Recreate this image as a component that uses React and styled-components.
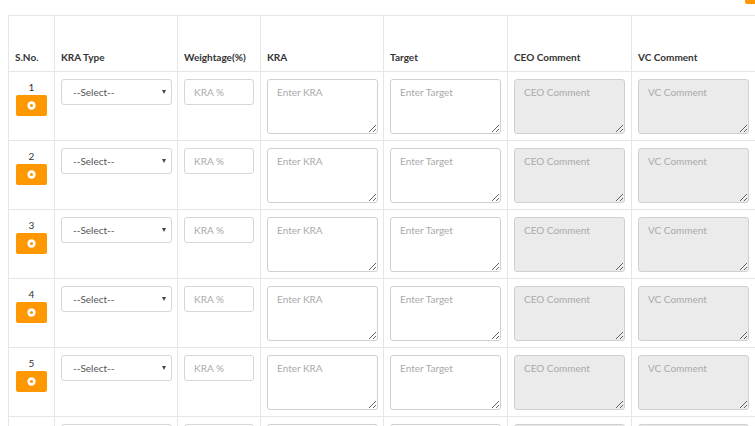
import React from 'react'
import styled, { createGlobalStyle } from 'styled-components'

const rows = [1, 2, 3, 4, 5, 6]

export default () => (
  <>
    <GlobalStyle />
    <Page>
      <TopBar>
        <CornerButton />
      </TopBar>
      <Table>
        <colgroup>
          <col style={{ width: 46 }} />
          <col style={{ width: 123 }} />
          <col style={{ width: 83 }} />
          <col style={{ width: 123 }} />
          <col style={{ width: 124 }} />
          <col style={{ width: 124 }} />
          <col style={{ width: 124 }} />
        </colgroup>
        <thead>
          <tr>
            <Th>S.No.</Th>
            <Th>KRA Type</Th>
            <Th>Weightage(%)</Th>
            <Th>KRA</Th>
            <Th>Target</Th>
            <Th>CEO Comment</Th>
            <Th>VC Comment</Th>
          </tr>
        </thead>
        <tbody>
          {rows.map(n => (
            <Row key={n} n={n} />
          ))}
        </tbody>
      </Table>
    </Page>
  </>
)

const Row = ({ n }) => (
  <tr>
    <NumCell>
      <Num>{n}</Num>
      <AddButton>
        <svg width='9' height='9' viewBox='0 0 10 10'>
          <circle cx='5' cy='5' r='4.6' fill='#fff' />
          <circle cx='5' cy='5' r='1.8' fill='#ff9800' />
        </svg>
      </AddButton>
    </NumCell>
    <Td>
      <SelectWrap>
        <Select defaultValue=''>
          <option value=''>--Select--</option>
        </Select>
        <Caret />
      </SelectWrap>
    </Td>
    <Td>
      <Input placeholder='KRA %' />
    </Td>
    <Td>
      <TextArea placeholder='Enter KRA' />
    </Td>
    <Td>
      <TextArea placeholder='Enter Target' />
    </Td>
    <Td>
      <TextArea placeholder='CEO Comment' disabled />
    </Td>
    <Td>
      <TextArea placeholder='VC Comment' disabled />
    </Td>
  </tr>
)

const GlobalStyle = createGlobalStyle`
  html, body {
    margin: 0;
    padding: 0;
    background: #fff;
    overflow: hidden;
  }
  body {
    font-family: Lato, "Liberation Sans", sans-serif;
    color: #333;
  }
`

const Page = styled.div`
  padding-left: 8px;
  width: 747px;
`

const TopBar = styled.div`
  height: 15px;
  display: flex;
  justify-content: flex-end;
  align-items: flex-start;
`

const CornerButton = styled.div`
  width: 10px;
  height: 4px;
  background: #ff9800;
  border-bottom-left-radius: 2px;
`

const Table = styled.table`
  border-collapse: collapse;
  table-layout: fixed;
  width: 747px;
  border-top: 1px solid #e6e6e6;
  border-left: 1px solid #e6e6e6;
`

const Th = styled.th`
  height: 47px;
  border: 1px solid #e6e6e6;
  border-top: none;
  text-align: left;
  vertical-align: bottom;
  padding: 0 6px 8px;
  font-size: 10px;
  font-weight: 700;
  color: #333;
  white-space: nowrap;
`

const Td = styled.td`
  height: 69px;
  border: 1px solid #e6e6e6;
  vertical-align: top;
  padding: 7px 6px 0;
  box-sizing: border-box;
`

const NumCell = styled(Td)`
  text-align: center;
  padding: 9px 0 0;
`

const Num = styled.div`
  font-size: 10px;
  line-height: 12px;
  color: #333;
  margin-bottom: 1px;
`

const AddButton = styled.button`
  width: 31px;
  height: 21px;
  border: none;
  border-radius: 2px;
  background: #ff9800;
  display: inline-flex;
  align-items: center;
  justify-content: center;
  padding: 0;
`

const SelectWrap = styled.div`
  position: relative;
  width: 111px;
`

const Select = styled.select`
  appearance: none;
  width: 111px;
  height: 26px;
  border: 1px solid #d6d6d6;
  border-radius: 3px;
  background: #fff;
  padding: 0 0 0 11px;
  font-family: Lato, "Liberation Sans", sans-serif;
  font-size: 10px;
  color: #555;
  box-sizing: border-box;
`

const Caret = styled.span`
  position: absolute;
  right: 6px;
  top: 11px;
  width: 0;
  height: 0;
  border-left: 2.5px solid transparent;
  border-right: 2.5px solid transparent;
  border-top: 4px solid #444;
  pointer-events: none;
`

const Input = styled.input`
  width: 70px;
  height: 26px;
  border: 1px solid #d6d6d6;
  border-radius: 3px;
  padding: 0 9px;
  font-family: Lato, "Liberation Sans", sans-serif;
  font-size: 10px;
  box-sizing: border-box;
  &::placeholder {
    color: #aaa;
  }
`

const TextArea = styled.textarea`
  display: block;
  width: 111px;
  height: 55px;
  border: 1px solid #d0d0d0;
  border-radius: 3px;
  padding: 6px 9px;
  font-family: Lato, "Liberation Sans", sans-serif;
  font-size: 10px;
  box-sizing: border-box;
  background: ${({ disabled }) => (disabled ? '#ebebeb' : '#fff')};
  &::placeholder {
    color: #aaa;
  }
`
